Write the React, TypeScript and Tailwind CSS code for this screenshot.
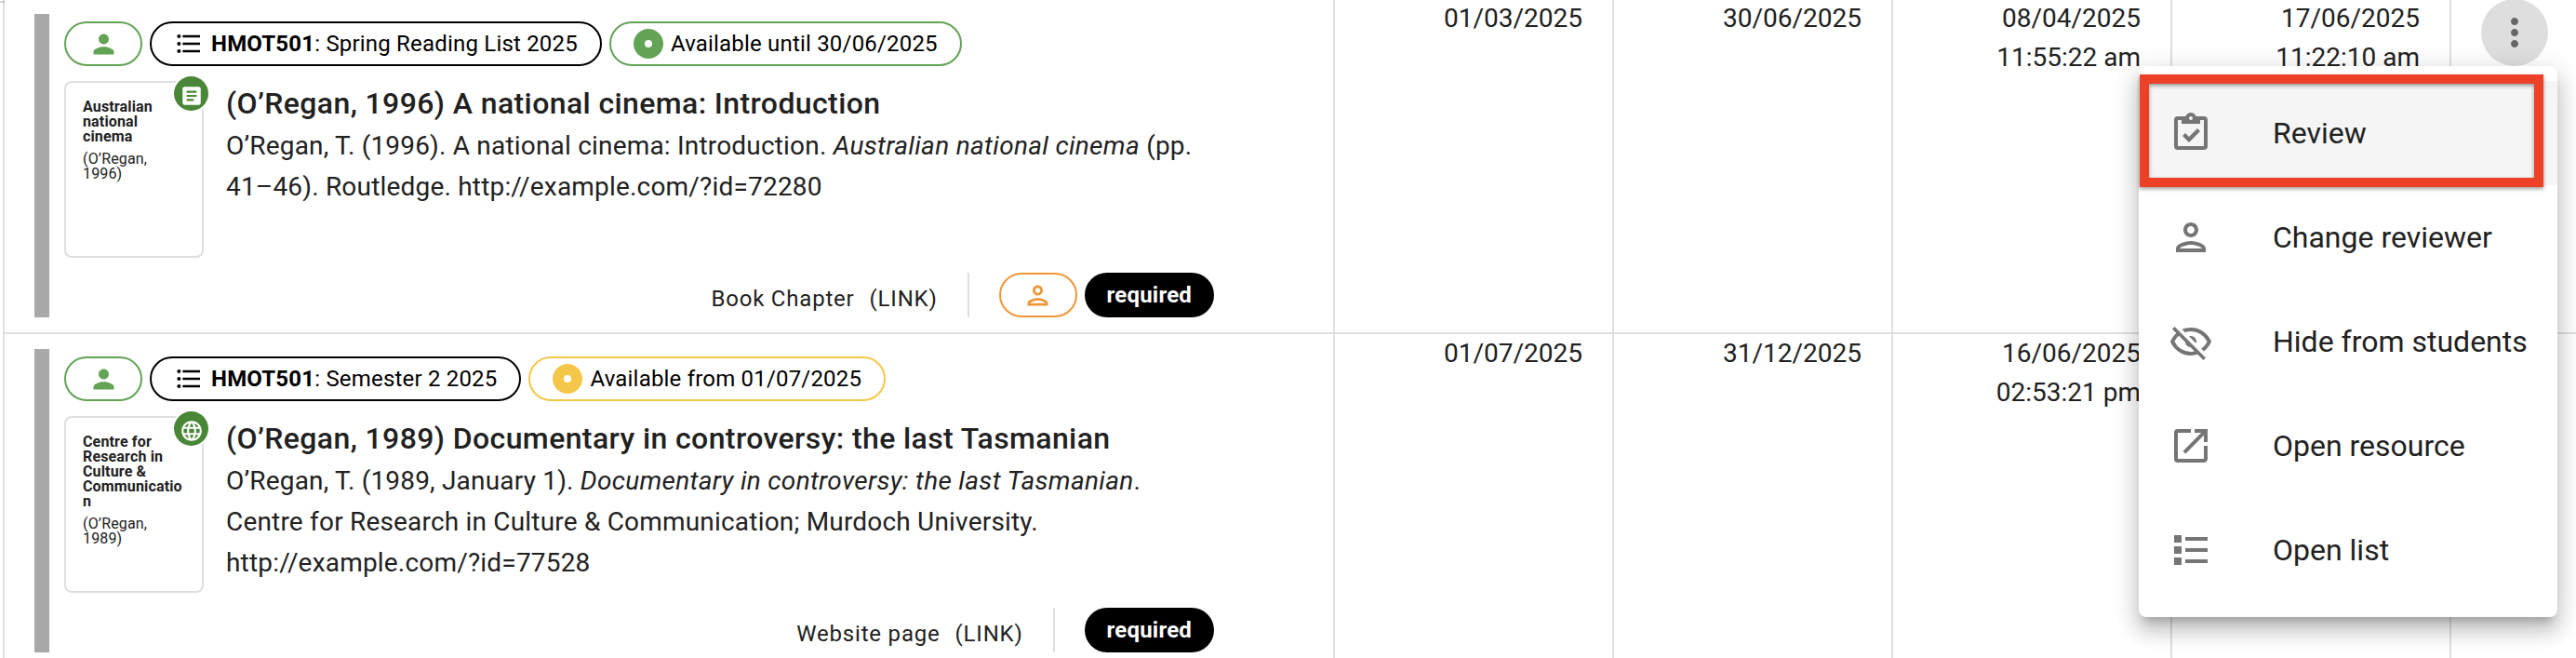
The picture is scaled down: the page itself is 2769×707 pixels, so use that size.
import type { ReactNode } from "react";
import {
  MdArticle,
  MdFormatListBulleted,
  MdLanguage,
  MdMoreVert,
  MdOpenInNew,
  MdOutlinePerson,
  MdPerson,
} from "react-icons/md";

type Row = {
  list: string;
  availability: { label: string; ring: string; dot: string };
  cover: { title: string; author: string; icon: ReactNode };
  title: string;
  citation: ReactNode;
  kind: string;
  reviewer: boolean;
  dates: string[][];
};

const rows: Row[] = [
  {
    list: "Spring Reading List 2025",
    availability: { label: "Available until 30/06/2025", ring: "border-[#62a356]", dot: "bg-[#62a356]" },
    cover: { title: "Australian national cinema", author: "(O’Regan, 1996)", icon: <MdArticle size={26} /> },
    title: "(O’Regan, 1996) A national cinema: Introduction",
    citation: (
      <>
        O’Regan, T. (1996). A national cinema: Introduction.{" "}
        <i className="tracking-[0.3px]">Australian national cinema</i> (pp. 41–46). Routledge.
        http://example.com/?id=72280
      </>
    ),
    kind: "Book Chapter",
    reviewer: true,
    dates: [["01/03/2025"], ["30/06/2025"], ["08/04/2025", "11:55:22 am"], ["17/06/2025", "11:22:10 am"]],
  },
  {
    list: "Semester 2 2025",
    availability: { label: "Available from 01/07/2025", ring: "border-[#f5c748]", dot: "bg-[#f5c748]" },
    cover: {
      title: "Centre for Research in Culture & Communication",
      author: "(O’Regan, 1989)",
      icon: <MdLanguage size={26} />,
    },
    title: "(O’Regan, 1989) Documentary in controversy: the last Tasmanian",
    citation: (
      <>
        O’Regan, T. (1989, January 1).{" "}
        <i className="tracking-[0.3px]">Documentary in controversy: the last Tasmanian</i>. Centre for Research in
        Culture & Communication; Murdoch University. http://example.com/?id=77528
      </>
    ),
    kind: "Website page",
    reviewer: false,
    dates: [["01/07/2025"], ["31/12/2025"], ["16/06/2025", "02:53:21 pm"], []],
  },
];

function Icon({ d }: { d: string }) {
  return (
    <svg width="48" height="48" viewBox="0 0 24 24" fill="currentColor">
      <path d={d} />
    </svg>
  );
}

const clipboardCheck =
  "M19 3h-4.18C14.4 1.84 13.3 1 12 1s-2.4.84-2.82 2H5a2 2 0 0 0-2 2v14a2 2 0 0 0 2 2h14a2 2 0 0 0 2-2V5a2 2 0 0 0-2-2m-7 0a1 1 0 0 1 1 1 1 1 0 0 1-1 1 1 1 0 0 1-1-1 1 1 0 0 1 1-1M7 7h10V5h2v14H5V5h2v2m.5 6.5L9 12l2 2 4.5-4.5L17 11l-6 6-3.5-3.5z";
const eyeOff =
  "M2 5.27L3.28 4 20 20.72 18.73 22l-3.08-3.08c-1.15.38-2.37.58-3.65.58-5 0-9.27-3.11-11-7.5.69-1.76 1.79-3.31 3.19-4.54L2 5.27M12 9a3 3 0 0 1 3 3c0 .35-.06.69-.17 1L11 9.17c.31-.11.65-.17 1-.17m0-4.5c5 0 9.27 3.11 11 7.5-.82 2.08-2.21 3.88-4 5.19l-1.42-1.43c1.36-.94 2.48-2.22 3.24-3.76A9.82 9.82 0 0 0 12 6.5c-1.09 0-2.16.18-3.16.5L7.3 5.47c1.44-.62 3.03-.97 4.7-.97M3.18 12A9.82 9.82 0 0 0 12 17.5c.69 0 1.37-.07 2-.21L11.72 15A3.06 3.06 0 0 1 9 12.28L5.6 8.87c-.99.85-1.82 1.91-2.42 3.13z";
const squareList = "M3 4h4v4H3zM9 5h12v2H9zM3 10h4v4H3zM9 11h12v2H9zM3 16h4v4H3zM9 17h12v2H9z";

const menuItems = [
  { label: "Review", icon: <Icon d={clipboardCheck} /> },
  { label: "Change reviewer", icon: <MdOutlinePerson size={48} /> },
  { label: "Hide from students", icon: <Icon d={eyeOff} /> },
  { label: "Open resource", icon: <MdOpenInNew size={48} /> },
  { label: "Open list", icon: <Icon d={squareList} /> },
];

function ResourceCell({ row }: { row: Row }) {
  return (
    <div className="flex w-[1430px] shrink-0 border-r-2 border-[#dfdfdf] py-4 pl-8">
      <div className="w-4 shrink-0 bg-[#a8a8a8]" />
      <div className="ml-4 flex w-[1236px] flex-col pt-2">
        <div className="flex gap-2 text-2xl leading-8 tracking-[0.19px] text-black">
          <span className="flex h-12 w-[84px] items-center justify-center rounded-full border-2 border-[#62a356] text-[#62a356]">
            <MdPerson size={33} />
          </span>
          <span className="flex h-12 items-center gap-2 rounded-full border-2 border-black px-6">
            <MdFormatListBulleted size={32} />
            <span className="whitespace-nowrap">
              <b>HMOT501</b>: {row.list}
            </span>
          </span>
          <span className={`flex h-12 items-center gap-2 rounded-full border-2 px-6 ${row.availability.ring}`}>
            <span className={`flex size-8 items-center justify-center rounded-full ${row.availability.dot}`}>
              <span className="size-2 rounded-full bg-white" />
            </span>
            <span className="whitespace-nowrap">{row.availability.label}</span>
          </span>
        </div>

        <div className="mt-4 flex">
          <div className="relative h-[190px] w-[150px] shrink-0 rounded-lg border-2 border-[#dfdfdf] p-[18px] text-base leading-4 tracking-[0.15px]">
            <p className="font-bold break-words">{row.cover.title}</p>
            <p className="mt-2 pr-4">{row.cover.author}</p>
            <span className="absolute -top-[9px] -right-[9px] flex size-[41px] items-center justify-center rounded-full bg-white">
              <span className="flex size-[37px] items-center justify-center rounded-full bg-[#4a8638] pt-[5px] text-white">
                {row.cover.icon}
              </span>
            </span>
          </div>
          <div className="ml-6 w-[1060px]">
            <h2 className="text-[32px] leading-[48px] font-medium tracking-[0.39px]">{row.title}</h2>
            <p className="text-[28px] leading-[44px] tracking-[0.19px]">{row.citation}</p>
          </div>
        </div>

        <div className="mt-auto flex h-12 items-center justify-end text-2xl">
          <span className="pt-2 tracking-[0.8px]">{row.kind}</span>
          <span className="ml-4 pt-2 tracking-[0.8px]">(LINK)</span>
          <span className="mx-8 h-12 w-0.5 bg-[#dfdfdf]" />
          {row.reviewer && (
            <span className="mr-2 flex h-12 w-[84px] items-center justify-center rounded-full border-2 border-[#f09637] text-[#f09637]">
              <MdOutlinePerson size={33} />
            </span>
          )}
          <span className="flex h-12 items-center rounded-full bg-black px-6 font-bold tracking-[0.19px] text-white">
            required
          </span>
        </div>
      </div>
    </div>
  );
}

function ActionMenu() {
  return (
    <div className="absolute top-[71px] left-[2299px] w-[450px] rounded-lg bg-white py-4 shadow-[0_10px_10px_-6px_rgba(0,0,0,0.2),0_16px_20px_2px_rgba(0,0,0,0.14),0_6px_28px_4px_rgba(0,0,0,0.12)]">
      {menuItems.map((item, i) => (
        <div key={item.label} className={`flex h-28 items-center px-8 ${i === 0 ? "bg-[#f5f5f5]" : ""}`}>
          <span className="w-28 shrink-0 text-[#757575]">{item.icon}</span>
          <span className="text-[32px] leading-[48px] whitespace-nowrap">{item.label}</span>
        </div>
      ))}
      {/* highlight around the Review entry */}
      <div className="absolute top-[9px] left-px h-[121px] w-[434px] border-10 border-[#ec4027] shadow-[0_2px_4px_rgba(0,0,0,0.4),inset_0_2px_4px_rgba(0,0,0,0.4)]" />
    </div>
  );
}

export default function App() {
  return (
    <div className="relative h-[707px] w-[2769px] overflow-hidden bg-white font-[Roboto,sans-serif] text-[#212121]">
      <div className="-mt-px ml-[3px] border-l-2 border-[#dfdfdf]">
        {rows.map((row, i) => (
          <div key={row.title} className="flex h-[360px] border-b-2 border-[#dfdfdf]">
            <ResourceCell row={row} />
            {row.dates.map((lines, j) => (
              <div
                key={j}
                className="w-[300px] shrink-0 border-r-2 border-[#dfdfdf] pr-8 text-right text-[28px] leading-[42px]"
              >
                {lines.map((line) => (
                  <div key={line}>{line}</div>
                ))}
              </div>
            ))}
            <div className="flex flex-1 items-start pl-8">
              {i === 0 && (
                <button className="flex size-[72px] items-center justify-center rounded-full bg-[#dedede] text-[#666]">
                  <MdMoreVert size={48} />
                </button>
              )}
            </div>
          </div>
        ))}
      </div>
      {/* edge of the outer table frame */}
      <div className="absolute top-px left-0 h-0.5 w-[5px] bg-black/15" />
      <ActionMenu />
    </div>
  );
}
